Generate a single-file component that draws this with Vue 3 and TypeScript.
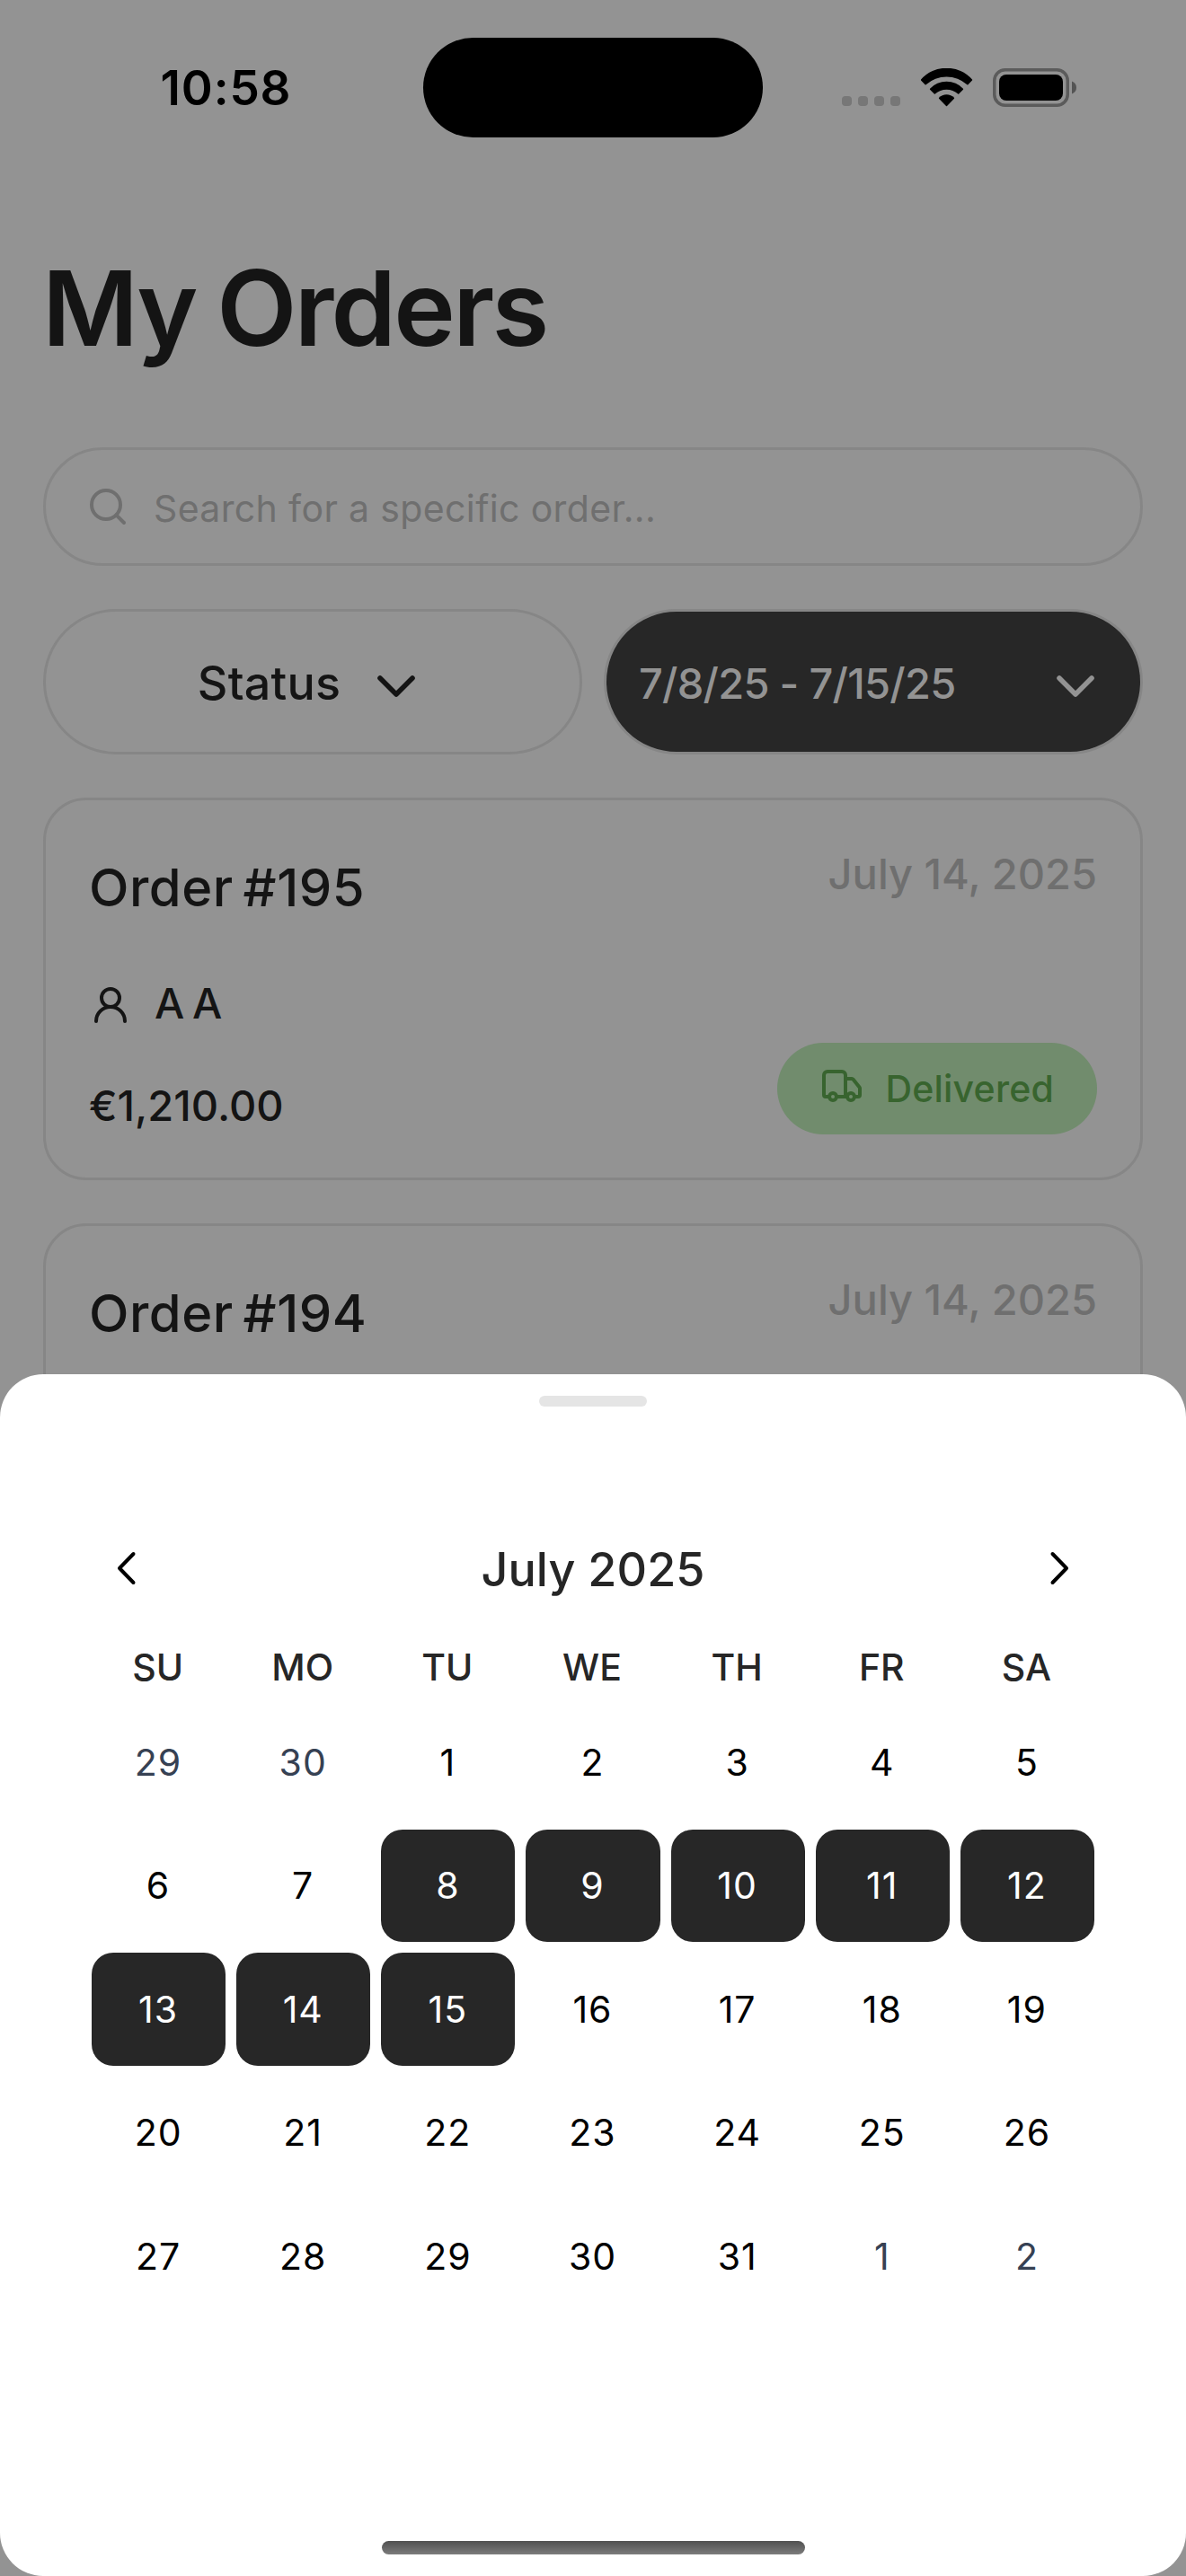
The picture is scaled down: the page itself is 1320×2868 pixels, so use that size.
<script setup lang="ts">
interface Order {
  id: number
  date: string
  customer: string
  total: string
  status: string
}

interface Day {
  label: number
  outside: boolean
  selected: boolean
}

const orders: Order[] = [
  { id: 195, date: 'July 14, 2025', customer: 'A A', total: '€1,210.00', status: 'Delivered' },
  { id: 194, date: 'July 14, 2025', customer: 'A A', total: '€1,210.00', status: 'Delivered' },
]

const weekdays = ['SU', 'MO', 'TU', 'WE', 'TH', 'FR', 'SA']

const rangeStart = 8
const rangeEnd = 15
const daysInMonth = 31
const leading = [29, 30]
const trailing = [1, 2]

const outsideDay = (label: number): Day => ({ label, outside: true, selected: false })

const days: Day[] = [
  ...leading.map(outsideDay),
  ...Array.from({ length: daysInMonth }, (_, i) => ({
    label: i + 1,
    outside: false,
    selected: i + 1 >= rangeStart && i + 1 <= rangeEnd,
  })),
  ...trailing.map(outsideDay),
]
</script>

<template>
  <div class="phone">
    <header class="status-bar">
      <span class="time">10:58</span>
      <div class="island"></div>
      <div class="indicators">
        <div class="signal"><i v-for="n in 4" :key="n"></i></div>
        <svg class="wifi" width="58" height="43" viewBox="0 0 58 43">
          <path d="M0 12.6A38 38 0 0 1 57 12.6Q57.4 13.1 57 13.6L52.4 18.3Q51.9 18.7 51.4 18.3A34.5 34.5 0 0 0 5.6 18.3Q5.1 18.7 4.6 18.3L0 13.6Q-.3 13.1 0 12.6Z" />
          <path d="M10 22.7A25.5 25.5 0 0 1 47 22.7Q47.3 23.2 47 23.7L42.2 28.5Q41.7 28.9 41.2 28.5A19.3 19.3 0 0 0 15.8 28.5Q15.3 28.9 14.8 28.5L10 23.7Q9.7 23.2 10 22.7Z" />
          <path d="M20 32.8A12 12 0 0 1 37 32.8Q37.3 33.3 37 33.8L29 42Q28.5 42.4 28 42L20 33.8Q19.7 33.3 20 32.8Z" />
        </svg>
        <svg class="battery" width="94" height="43" viewBox="0 0 94 43">
          <rect x="1.75" y="1.75" width="81.5" height="39.5" rx="12" fill="none" stroke="#5b5b5b" stroke-width="3.5" />
          <rect x="7" y="7" width="71" height="29" rx="8" fill="#000" />
          <path d="M88 14.5Q93 16.500 93 21.500T88 28.500Z" fill="#545454" />
        </svg>
      </div>
    </header>

    <main class="page">
      <h1>My Orders</h1>

      <div class="search">
        <svg class="icon" viewBox="0 0 24 24"><circle cx="11" cy="11" r="8" /><path d="m21 21-4.300-4.300" /></svg>
        <span>Search for a specific order...</span>
      </div>

      <div class="filters">
        <button class="filter" type="button">
          <span>Status</span>
          <svg class="caret" viewBox="0 0 42 24"><path d="m3 3 18 18L39 3" /></svg>
        </button>
        <button class="filter active" type="button">
          <span>7/8/25 - 7/15/25</span>
          <svg class="caret" viewBox="0 0 42 24"><path d="m3 3 18 18L39 3" /></svg>
        </button>
      </div>

      <article v-for="order in orders" :key="order.id" class="card">
        <div class="details">
          <h2>Order #{{ order.id }}</h2>
          <div class="customer">
            <svg class="icon" viewBox="0 0 24 24"><circle cx="12" cy="8" r="5" /><path d="M20 21a8 8 0 0 0-16 0" /></svg>
            <span>{{ order.customer }}</span>
          </div>
          <div class="total">{{ order.total }}</div>
        </div>
        <div class="meta">
          <time>{{ order.date }}</time>
          <div class="badge">
            <svg class="icon" viewBox="0 0 24 24">
              <path d="M14 18V6a2 2 0 0 0-2-2H4a2 2 0 0 0-2 2v11a1 1 0 0 0 1 1h2" />
              <path d="M15 18H9" />
              <path d="M19 18h2a1 1 0 0 0 1-1v-3.650a1 1 0 0 0-.220-.624l-3.480-4.350A1 1 0 0 0 17.520 8H14" />
              <circle cx="17" cy="18" r="2" />
              <circle cx="7" cy="18" r="2" />
            </svg>
            <span>{{ order.status }}</span>
          </div>
        </div>
      </article>
    </main>

    <section class="sheet">
      <div class="handle"></div>
      <div class="month">
        <svg width="23" height="40" viewBox="0 0 23 40"><path d="M19.500 4 4 20l15.500 16" /></svg>
        <span>July 2025</span>
        <svg width="23" height="40" viewBox="0 0 23 40"><path d="M3.500 4 19 20 3.500 36" /></svg>
      </div>
      <div class="weekdays">
        <span v-for="name in weekdays" :key="name">{{ name }}</span>
      </div>
      <div class="days">
        <div v-for="(day, i) in days" :key="i" class="cell">
          <div class="day" :class="{ outside: day.outside, selected: day.selected }">{{ day.label }}</div>
        </div>
      </div>
      <div class="home-indicator"></div>
    </section>
  </div>
</template>

<style>
body {
  background: #939393;
}
</style>

<style scoped>
.phone {
  position: relative;
  width: 1320px;
  height: 2868px;
  overflow: hidden;
  background: #939393;
  color: #141414;
  font-family: Inter, "Liberation Sans", sans-serif;
  font-weight: 500;
}

.phone * {
  box-sizing: border-box;
}

span,
time,
h1,
h2,
.total {
  white-space: nowrap;
}

.icon {
  flex: none;
  width: 48px;
  height: 48px;
  fill: none;
  stroke: currentColor;
  stroke-width: 2;
  stroke-linecap: round;
  stroke-linejoin: round;
}

/* Status bar */
.status-bar {
  display: grid;
  grid-template-columns: 471px 378px 471px;
  align-items: center;
  height: 194px;
  color: #000;
}

.time {
  padding: 2px 0 0 32px;
  text-align: center;
  font-size: 53px;
  font-weight: 600;
  letter-spacing: 0.85px;
}

.island {
  height: 111px;
  border-radius: 56px;
  background: #000;
}

.indicators {
  display: flex;
  align-items: center;
  height: 43px;
  padding-left: 88px;
}

.signal {
  display: flex;
  gap: 7px;
  align-self: flex-end;
  margin-right: 23px;
  padding-bottom: 1px;
}

.signal i {
  width: 11px;
  height: 11px;
  border-radius: 4px;
  background: #777;
}

.wifi {
  margin-right: 22px;
}

/* Page */
.page {
  display: flex;
  flex-direction: column;
  gap: 48px;
  padding: 79px 48px 0;
}

h1 {
  margin: 0 0 37px -1px;
  font-size: 116px;
  font-weight: 600;
  line-height: 140px;
  letter-spacing: -2.7px;
  word-spacing: -3px;
}

.search {
  display: flex;
  align-items: center;
  gap: 27px;
  height: 132px;
  padding: 0 45px;
  border: 3px solid #868686;
  border-radius: 66px;
  color: #6f6f6f;
  font-size: 41px;
  font-weight: 400;
  letter-spacing: 0.36px;
}

.search span {
  padding-top: 4px;
}

.filters {
  display: grid;
  grid-template-columns: 1fr 1fr;
  gap: 24px;
}

.filter {
  display: flex;
  align-items: center;
  justify-content: center;
  gap: 41px;
  height: 162px;
  padding: 2px 14px 0 0;
  border: 3px solid #868686;
  border-radius: 81px;
  background: none;
  color: #141414;
  font: inherit;
  font-size: 52px;
  letter-spacing: 0.2px;
}

.filter.active {
  justify-content: space-between;
  padding: 2px 51px 0 36px;
  background: #272727;
  color: #939393;
  font-size: 47px;
  letter-spacing: -0.73px;
}

.caret {
  width: 42px;
  height: 24px;
  margin-top: 8px;
  fill: none;
  stroke: currentColor;
  stroke-width: 5.6;
  stroke-linecap: round;
  stroke-linejoin: round;
}

.card {
  display: flex;
  justify-content: space-between;
  flex: none;
  height: 426px;
  padding: 48px;
  border: 3px solid #868686;
  border-radius: 48px;
}

h2 {
  margin: 19px 0 77px;
  font-size: 58px;
  font-weight: 500;
  line-height: 60px;
  letter-spacing: 0.5px;
  word-spacing: -5px;
}

.customer {
  display: flex;
  gap: 25px;
  height: 48px;
  font-size: 47px;
  line-height: 44px;
  word-spacing: -3.9px;
}

.total {
  margin-top: 60px;
  font-size: 47px;
  line-height: 56px;
}

.meta {
  display: flex;
  flex-direction: column;
  align-items: flex-end;
  justify-content: space-between;
}

time {
  color: #6f6f6f;
  font-size: 47px;
  line-height: 68px;
}

.badge {
  display: flex;
  align-items: center;
  gap: 24px;
  height: 102px;
  padding: 0 48px;
  border-radius: 51px;
  background: #718c6d;
  color: #38642f;
  font-size: 41px;
  letter-spacing: 0.2px;
}

.badge .icon {
  margin-top: -6px;
}

/* Calendar sheet laid over the page */
.sheet {
  position: absolute;
  left: 0;
  right: 0;
  bottom: 0;
  display: flex;
  flex-direction: column;
  height: 1338px;
  padding: 24px 96px;
  border-radius: 48px;
  background: #fff;
  color: #262626;
}

.handle {
  align-self: center;
  width: 120px;
  height: 12px;
  border-radius: 6px;
  background: #e5e5e5;
}

.month {
  display: flex;
  align-items: center;
  justify-content: space-between;
  height: 72px;
  margin-top: 144px;
  padding: 0 33px;
  font-size: 52px;
  letter-spacing: 0.1px;
}

.month span {
  padding-top: 2px;
}

.month svg {
  fill: none;
  stroke: #000;
  stroke-width: 4;
  stroke-linecap: round;
  stroke-linejoin: round;
}

.weekdays,
.days {
  display: grid;
  grid-template-columns: repeat(7, 1fr);
  font-size: 41px;
  text-align: center;
}

.weekdays {
  margin-top: 44px;
  line-height: 60px;
}

.weekdays span {
  padding-right: 2px;
}

.days {
  grid-auto-rows: 137.5px;
  margin-top: 7px;
  color: #000;
  font-weight: 400;
}

.cell {
  padding: 6px;
}

.day {
  display: flex;
  align-items: center;
  justify-content: center;
  height: 100%;
  padding-right: 1px;
  border-radius: 24px;
  letter-spacing: 1px;
}

.day.outside {
  color: #364153;
}

.day.selected {
  background: #272727;
  color: #fff;
}

.home-indicator {
  align-self: center;
  width: 471px;
  height: 15px;
  margin-top: auto;
  border-radius: 7.5px;
  background: linear-gradient(#505050, #7c7c7c);
}
</style>
